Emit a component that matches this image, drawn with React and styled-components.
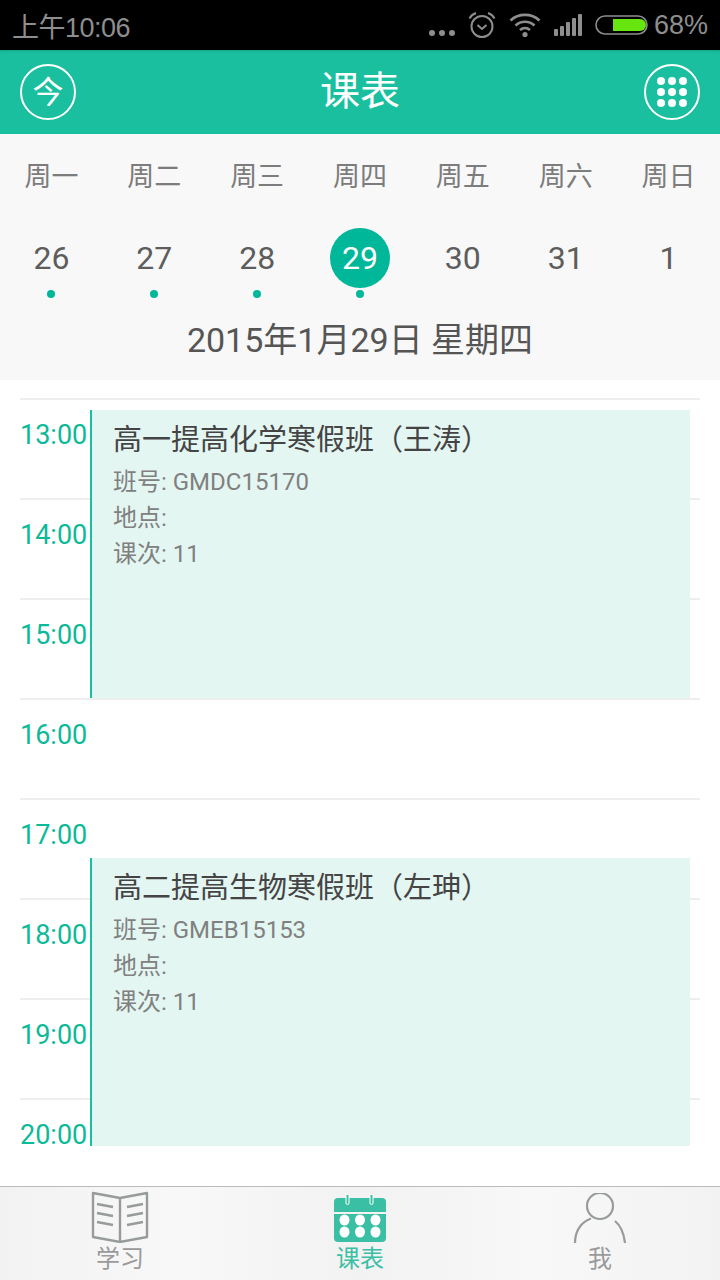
import React from "react";
import styled, { createGlobalStyle } from "styled-components";

const GlobalStyle = createGlobalStyle`
  html, body {
    margin: 0;
    padding: 0;
    background: #fff;
    font-family: Roboto, "Noto Sans CJK SC", sans-serif;
  }
  * {
    box-sizing: border-box;
  }
`;

const days = [
  { name: "周一", num: "26", dot: true },
  { name: "周二", num: "27", dot: true },
  { name: "周三", num: "28", dot: true },
  { name: "周四", num: "29", dot: true, active: true },
  { name: "周五", num: "30" },
  { name: "周六", num: "31" },
  { name: "周日", num: "1" },
];

const hours = ["13:00", "14:00", "15:00", "16:00", "17:00", "18:00", "19:00", "20:00"];

const courses = [
  { top: 12, title: "高一提高化学寒假班（王涛）", code: "GMDC15170" },
  { top: 460, title: "高二提高生物寒假班（左珅）", code: "GMEB15153" },
];

const AlarmIcon = () => (
  <svg width="28" height="28" viewBox="0 0 28 28" fill="none" stroke="#8e8e8e" strokeWidth="2">
    <circle cx="14" cy="15.5" r="10.5" />
    <path d="M9.5 14l4.5 4 4.5-4" />
    <path d="M1.5 7.5C3 4.5 5 3 8 2M26.5 7.5C25 4.5 23 3 20 2" />
  </svg>
);

const WifiIcon = () => (
  <svg width="32" height="26" viewBox="0 0 32 26" fill="none" stroke="#8e8e8e" strokeWidth="2.6">
    <path d="M1.5 8.5C9.5 1 22.5 1 30.5 8.5" />
    <path d="M6.5 13.5C12 8.5 20 8.5 25.5 13.5" />
    <path d="M11 18C14 15.5 18 15.5 21 18" />
    <circle cx="16" cy="22.5" r="2.6" fill="#8e8e8e" stroke="none" />
  </svg>
);

const SignalIcon = () => (
  <svg width="28" height="22" viewBox="0 0 28 22" fill="#8e8e8e">
    <rect x="0" y="15" width="4" height="7" rx="1" />
    <rect x="6" y="12" width="4" height="10" rx="1" />
    <rect x="12" y="8" width="4" height="14" rx="1" />
    <rect x="18" y="4" width="4" height="18" rx="1" />
    <rect x="24" y="0" width="4" height="22" rx="1" />
  </svg>
);

const BatteryIcon = () => (
  <svg width="54" height="20" viewBox="0 0 54 20" fill="none">
    <rect x="1" y="1" width="51" height="18" rx="9" stroke="#8e8e8e" strokeWidth="1.6" />
    <path d="M18 4h27a6 6 0 0 1 0 12H18z" fill="#66e50f" />
  </svg>
);

const BookIcon = () => (
  <svg width="58" height="52" viewBox="0 0 58 52" fill="none" stroke="#979b9a" strokeWidth="2.4" strokeLinejoin="round">
    <path d="M2 2l27 5 27-5v44l-27 5-27-5z" />
    <path d="M29 7v44" />
    <path d="M6 13l16 3M6 22l16 3M6 31l16 3" />
    <path d="M52 13l-16 3M52 22l-16 3M52 31l-16 3" />
  </svg>
);

const CalendarIcon = () => (
  <svg width="54" height="48" viewBox="0 0 54 48" fill="none">
    <path d="M5 3h44a4 4 0 0 1 4 4v10H1V7a4 4 0 0 1 4-4z" fill="#3abfa4" />
    <path d="M1 19h52v24a4 4 0 0 1-4 4H5a4 4 0 0 1-4-4z" fill="#3abfa4" />
    <path d="M13 0v8a1.5 1.5 0 0 0 3 0V0M37 0v8a1.5 1.5 0 0 0 3 0V0" stroke="#fff" strokeWidth="1" fill="#3abfa4" />
    {[10, 25.500, 41].map((x) =>
      [25, 37].map((y) => <ellipse key={`${x}-${y}`} cx={x + 1.5} cy={y} rx="5" ry="5.500" fill="#fff" />)
    )}
  </svg>
);

const PersonIcon = () => (
  <svg width="52" height="50" viewBox="0 0 52 50" fill="none" stroke="#979b9a" strokeWidth="2.2">
    <ellipse cx="26" cy="13" rx="13" ry="13" />
    <path d="M1 50C1 38 7 29 17 25.500M41 28C47 33 50 41 51 50" />
  </svg>
);

const App = () => {
  return (
    <Page>
      <GlobalStyle />
      <StatusBar>
        <Clock>上午10:06</Clock>
        <StatusRight>
          <MoreDots>
            <i />
            <i />
            <i />
          </MoreDots>
          <AlarmIcon />
          <WifiIcon />
          <SignalIcon />
          <BatteryIcon />
          <Percent>68%</Percent>
        </StatusRight>
      </StatusBar>

      <Header>
        <RoundBtn>
          <TodayGlyph>今</TodayGlyph>
        </RoundBtn>
        <Title>课表</Title>
        <RoundBtn>
          <GridDots>
            {Array.from({ length: 9 }).map((_, i) => (
              <i key={i} />
            ))}
          </GridDots>
        </RoundBtn>
      </Header>

      <WeekPanel>
        <WeekGrid>
          {days.map((d) => (
            <DayCol key={d.name}>
              <DayName>{d.name}</DayName>
              <DayNum $active={d.active}>{d.num}</DayNum>
              <DayDot $show={d.dot} />
            </DayCol>
          ))}
        </WeekGrid>
        <DateLine>2015年1月29日 星期四</DateLine>
      </WeekPanel>

      <Schedule>
        {hours.map((h) => (
          <HourRow key={h}>
            <HourLabel>{h}</HourLabel>
          </HourRow>
        ))}
        {courses.map((c) => (
          <Course key={c.code} $top={c.top}>
            <CourseTitle>{c.title}</CourseTitle>
            <CourseLine>班号: {c.code}</CourseLine>
            <CourseLine>地点:</CourseLine>
            <CourseLine>课次: 11</CourseLine>
          </Course>
        ))}
      </Schedule>

      <TabBar>
        <Tab>
          <TabIcon>
            <BookIcon />
          </TabIcon>
          <TabLabel>学习</TabLabel>
        </Tab>
        <Tab>
          <TabIcon>
            <CalendarIcon />
          </TabIcon>
          <TabLabel $active>课表</TabLabel>
        </Tab>
        <Tab>
          <TabIcon>
            <PersonIcon />
          </TabIcon>
          <TabLabel>我</TabLabel>
        </Tab>
      </TabBar>
    </Page>
  );
};

const Page = styled.div`
  width: 720px;
  height: 1280px;
  display: flex;
  flex-direction: column;
  overflow: hidden;
  background: #fff;
`;

/////////// status bar

const StatusBar = styled.div`
  height: 50px;
  background: #000;
  color: #8e8e8e;
  display: flex;
  align-items: center;
  justify-content: space-between;
  padding: 0 12px;
  font-family: "Liberation Sans", "Noto Sans CJK SC", sans-serif;
`;

const Clock = styled.div`
  font-size: 27px;
  letter-spacing: -0.5px;
`;

const StatusRight = styled.div`
  display: flex;
  align-items: center;
  gap: 13px;
`;

const MoreDots = styled.div`
  display: flex;
  gap: 4px;
  margin-top: 16px;
  & i {
    width: 6px;
    height: 6px;
    border-radius: 50%;
    background: #8e8e8e;
  }
`;

const Percent = styled.div`
  font-size: 27px;
  margin-left: -8px;
`;

/////////// header

const Header = styled.div`
  height: 84px;
  background: #1abf9f;
  box-shadow: inset 0 3px 3px -2px rgba(0, 0, 0, 0.15);
  display: flex;
  align-items: center;
  justify-content: space-between;
  padding: 0 20px;
`;

const RoundBtn = styled.div`
  width: 56px;
  height: 56px;
  border: 2px solid #fff;
  border-radius: 50%;
  display: flex;
  align-items: center;
  justify-content: center;
`;

const TodayGlyph = styled.span`
  color: #fff;
  font-size: 31px;
  line-height: 1;
`;

const GridDots = styled.div`
  display: grid;
  grid-template-columns: repeat(3, 8px);
  gap: 3px;
  & i {
    width: 8px;
    height: 8px;
    border-radius: 50%;
    background: #fff;
  }
`;

const Title = styled.div`
  color: #fff;
  font-size: 40px;
  line-height: 1;
`;

/////////// week

const WeekPanel = styled.div`
  height: 246px;
  background: #f8f8f8;
  padding-top: 24px;
`;

const WeekGrid = styled.div`
  display: grid;
  grid-template-columns: repeat(7, 1fr);
`;

const DayCol = styled.div`
  display: flex;
  flex-direction: column;
  align-items: center;
`;

const DayName = styled.div`
  font-size: 27px;
  line-height: 38px;
  color: #7c7c7c;
`;

const DayNum = styled.div`
  width: 60px;
  height: 60px;
  margin-top: 32px;
  border-radius: 50%;
  display: flex;
  align-items: center;
  justify-content: center;
  font-size: 32px;
  color: ${(props) => (props.$active ? "#fff" : "#5d5d5d")};
  background: ${(props) => (props.$active ? "#00b899" : "transparent")};
`;

const DayDot = styled.div`
  width: 8px;
  height: 8px;
  margin-top: 2px;
  border-radius: 50%;
  background: ${(props) => (props.$show ? "#00b899" : "transparent")};
`;

const DateLine = styled.div`
  margin-top: 20px;
  text-align: center;
  font-size: 34px;
  line-height: 44px;
  color: #555;
`;

/////////// schedule

const Schedule = styled.div`
  position: relative;
  flex: 1;
  padding: 18px 20px 0;
  overflow: hidden;
`;

const HourRow = styled.div`
  height: 100px;
  border-top: 2px solid #eeeeee;
  padding-top: 18px;
`;

const HourLabel = styled.div`
  font-size: 27px;
  line-height: 34px;
  color: #0cb998;
`;

const Course = styled.div`
  position: absolute;
  left: 90px;
  top: ${(props) => props.$top + 18}px;
  width: 600px;
  height: 288px;
  background: #e4f6f2;
  border-left: 2px solid #1abf9f;
  padding: 12px 0 0 21px;
`;

const CourseTitle = styled.div`
  font-size: 29px;
  line-height: 36px;
  color: #444;
  margin-bottom: 6px;
`;

const CourseLine = styled.div`
  font-size: 24px;
  line-height: 36px;
  color: #808080;
`;

/////////// tab bar

const TabBar = styled.div`
  height: 94px;
  border-top: 1px solid #bbbbbb;
  background: linear-gradient(to right, #f2f2f2, #f8f8f8 25%, #f2f2f2 50%, #f8f8f8 75%, #f2f2f2);
  display: grid;
  grid-template-columns: repeat(3, 1fr);
`;

const Tab = styled.div`
  display: flex;
  flex-direction: column;
  align-items: center;
`;

const TabIcon = styled.div`
  height: 56px;
  display: flex;
  align-items: flex-end;
`;

const TabLabel = styled.div`
  font-size: 24px;
  line-height: 32px;
  color: ${(props) => (props.$active ? "#3abfa4" : "#9a9a9a")};
`;

export default App;
